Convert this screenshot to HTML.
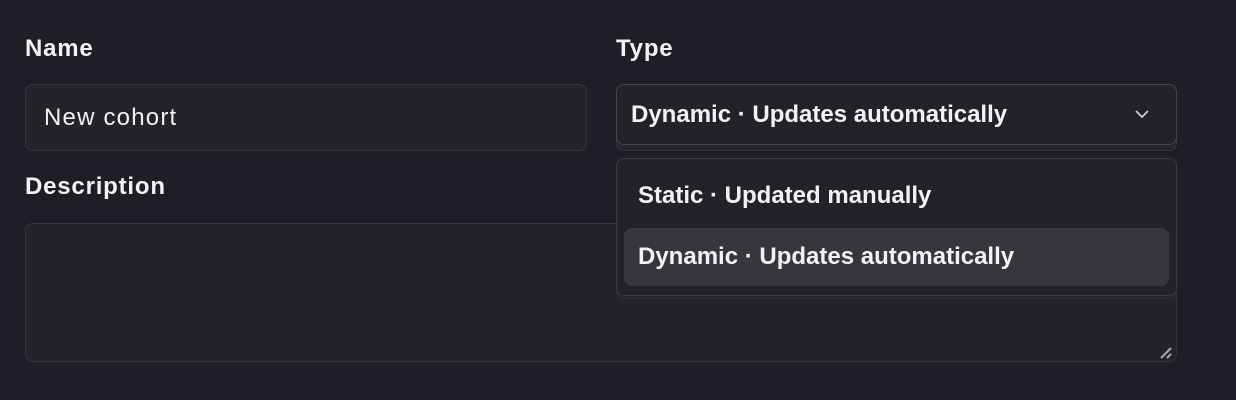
<!DOCTYPE html>
<html><head><style>
body{margin:0;width:1236px;height:400px;background:#1e1f26;font-family:"Liberation Sans",sans-serif;color:#f2f2f3;position:relative;overflow:hidden}
.lbl{position:absolute;font-weight:bold;font-size:24px;letter-spacing:0.8px}
.box{position:absolute;box-sizing:border-box;background:#232429;border:1px solid #35363c;border-radius:8px}
.t{position:absolute;font-size:24px;white-space:nowrap}
</style></head><body>
<div class="lbl" style="left:25px;top:35px">Name</div>
<div class="lbl" style="left:616px;top:35px">Type</div>
<div class="box" style="left:25px;top:84px;width:562px;height:67px"></div>
<div class="t" style="left:44px;top:104px;letter-spacing:1.2px">New cohort</div>
<div class="lbl" style="left:25px;top:173px">Description</div>
<div class="box" style="left:25px;top:223px;width:1152px;height:139px"></div>
<svg style="position:absolute;left:1158px;top:345px" width="16" height="16"><path d="M3 13L13 3M9 13L13 9" stroke="#aaa" stroke-width="2"/></svg>
<div class="box" style="left:616px;top:90px;width:561px;height:61px;background:#26272c"></div>
<div class="box" style="left:616px;top:84px;width:561px;height:61px;background:#222328;border-color:#44454b"></div>
<div class="t" style="left:631px;top:101px;font-weight:bold">Dynamic · Updates automatically</div>
<svg style="position:absolute;left:1134px;top:108px" width="16" height="12"><path d="M2 3L8 9L14 3" stroke="#ccc" stroke-width="1.8" fill="none"/></svg>
<div class="box" style="left:616px;top:164px;width:561px;height:135px;background:#26272c;border-color:#303137"></div>
<div class="box" style="left:616px;top:158px;width:561px;height:138px;background:#222328;border-color:#3a3b41"></div>
<div style="position:absolute;left:624px;top:228px;width:545px;height:58px;background:#36373d;border-radius:8px"></div>
<div class="t" style="left:638px;top:182px;font-weight:bold">Static · Updated manually</div>
<div class="t" style="left:638px;top:243px;font-weight:bold">Dynamic · Updates automatically</div>
</body></html>
